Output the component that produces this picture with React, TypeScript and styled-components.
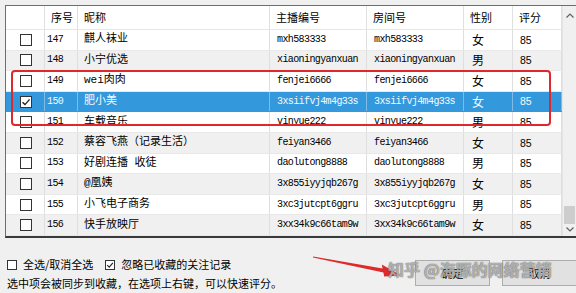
import React from "react";
import styled, { createGlobalStyle } from "styled-components";

const GlobalStyle = createGlobalStyle`
  html, body {
    margin: 0;
    padding: 0;
    background: #f0f0f0;
    overflow: hidden;
  }
  * { box-sizing: border-box; }
`;

const CJK = `"Noto Sans CJK SC", "Noto Sans", sans-serif`;
const MONO = `"Liberation Mono", "Noto Sans CJK SC", monospace`;
const SANS = `"Liberation Sans", Arial, sans-serif`;

const COLS = "39px 33px 192px 97px 97px 49px 49px";

const Page = styled.div`
  position: relative;
  width: 576px;
  height: 293px;
  overflow: hidden;
  display: flex;
  flex-direction: column;
  font-family: ${CJK};
  color: #000;
`;

const TableFrame = styled.div`
  position: relative;
  margin: 5px 0 0 5px;
  display: flex;
  width: 571px;
  border-top: 1px solid #6e6e6e;
  border-left: 1px solid #6e6e6e;
  border-bottom: 2px solid #3a3a3a;
  background: #fff;
`;

const Grid = styled.div`
  display: flex;
  flex-direction: column;
  width: 556px;
`;

const HeaderRow = styled.div`
  display: grid;
  grid-template-columns: ${COLS};
  height: 24px;
  background: #fff;
  border-bottom: 1px solid #e6e6e6;
`;

const HeadCell = styled.div`
  display: flex;
  align-items: center;
  padding-left: 6px;
  font-family: ${CJK};
  font-size: 11px;
  line-height: 1;
  border-right: 1px solid #e0e0e0;
`;

const Row = styled.div<{ $alt: boolean; $selected: boolean }>`
  --grid: ${(p) => (p.$selected ? "#7dbce9" : "#dedede")};
  display: grid;
  grid-template-columns: ${COLS};
  height: 20.6px;
  background: ${(p) => (p.$selected ? "#3398dc" : p.$alt ? "#f0f0f0" : "#ffffff")};
  color: ${(p) => (p.$selected ? "#f4faff" : "#000")};
  border-bottom: 1px solid ${(p) => (p.$selected ? "#3398dc" : "#e8e8e8")};
`;

const BaseCell = styled.div`
  display: flex;
  align-items: center;
  padding-left: 6px;
  white-space: nowrap;
  overflow: hidden;
  border-right: 1px solid var(--grid);
  line-height: 1;
`;

const CheckCell = styled(BaseCell)`
  padding-left: 14px;
`;

const NumCell = styled(BaseCell)`
  padding-left: 2px;
  font-family: ${MONO};
  font-size: 10px;
  letter-spacing: -0.6px;
`;

const NameCell = styled(BaseCell)`
  font-family: ${MONO};
  font-size: 11px;
`;

const CodeCell = styled(BaseCell)`
  padding-left: 7px;
  font-family: ${MONO};
  font-size: 10px;
  letter-spacing: -0.6px;
`;

const GenderCell = styled(BaseCell)`
  padding-left: 8px;
  font-family: ${CJK};
  font-size: 12px;
`;

const ScoreCell = styled(BaseCell)`
  padding-left: 7px;
  font-family: ${SANS};
  font-size: 10.5px;
`;

const Box = styled.span<{ $size: number }>`
  display: inline-flex;
  align-items: center;
  justify-content: center;
  flex: none;
  width: ${(p) => p.$size}px;
  height: ${(p) => p.$size}px;
  border: 1px solid #333;
  background: #fff;
`;

const CheckBox = ({ checked, size }: { checked?: boolean; size: number }) => (
  <Box $size={size}>
    {checked && (
      <svg width={size - 2} height={size - 2} viewBox="0 0 10 10">
        <path d="M1.5 5.2 L4 7.6 L8.6 2.4" fill="none" stroke="#222" strokeWidth="1.4" />
      </svg>
    )}
  </Box>
);

const Scrollbar = styled.div`
  width: 14px;
  display: flex;
  flex-direction: column;
  background: #f0f0f0;
  border-left: 1px solid #e4e4e4;
`;

const ScrollArrow = styled.div<{ $h: number }>`
  height: ${(p) => p.$h}px;
  display: flex;
  align-items: center;
  justify-content: center;
`;

const Track = styled.div`
  flex: 1;
  display: flex;
  flex-direction: column;
  justify-content: flex-end;
`;

const Thumb = styled.div`
  height: 18px;
  margin: 0 1px;
  background: #cdcdcd;
`;

const Highlight = styled.div`
  position: absolute;
  left: 5px;
  top: 64px;
  width: 540px;
  height: 56px;
  border: 2px solid #e0282c;
  border-radius: 4px;
  pointer-events: none;
`;

const Footer = styled.div`
  display: flex;
  padding-left: 7px;
`;

const FooterLeft = styled.div`
  display: flex;
  flex-direction: column;
  padding-top: 18px;
`;

const Options = styled.div`
  display: flex;
  align-items: center;
  height: 18px;
  font-size: 11px;
  line-height: 1;
`;

const Option = styled.label`
  display: flex;
  align-items: center;
  gap: 6px;
  margin-right: 12px;
`;

const Hint = styled.div`
  margin-top: 1px;
  height: 18px;
  display: flex;
  align-items: center;
  font-size: 11px;
  line-height: 1;
`;

const ButtonGroup = styled.div`
  display: flex;
  gap: 12px;
  margin-left: auto;
  margin-right: -1px;
  margin-top: 22px;
`;

const Button = styled.button`
  width: 75px;
  height: 26px;
  padding: 0;
  background: #e1e1e1;
  border: 1px solid #adadad;
  font-family: ${CJK};
  font-size: 11px;
  color: #000;
`;

const Arrow = styled.svg`
  position: absolute;
  left: 305px;
  top: 250px;
  pointer-events: none;
`;

const Watermark = styled.div`
  position: absolute;
  left: 388px;
  top: 259px;
  font-family: ${CJK};
  font-size: 16px;
  font-weight: 700;
  line-height: 20px;
  white-space: nowrap;
  color: rgba(255, 255, 255, 0.55);
  text-shadow: 0 0 1px rgba(60, 60, 60, 0.75), 0 0 1px rgba(60, 60, 60, 0.6);
  pointer-events: none;
`;

type Item = {
  id: number;
  name: string;
  code: string;
  room: string;
  gender: string;
  score: number;
  selected?: boolean;
};

const items: Item[] = [
  { id: 147, name: "麒人袜业", code: "mxh583333", room: "mxh583333", gender: "女", score: 85 },
  { id: 148, name: "小宁优选", code: "xiaoningyanxuan", room: "xiaoningyanxuan", gender: "男", score: 85 },
  { id: 149, name: "wei肉肉", code: "fenjei6666", room: "fenjei6666", gender: "女", score: 85 },
  { id: 150, name: "肥小美", code: "3xsiifvj4m4g33s", room: "3xsiifvj4m4g33s", gender: "女", score: 85, selected: true },
  { id: 151, name: "车载音乐", code: "vinyue222", room: "vinyue222", gender: "男", score: 85 },
  { id: 152, name: "蔡容飞燕（记录生活）", code: "feiyan3466", room: "feiyan3466", gender: "女", score: 85 },
  { id: 153, name: "好剧连播 收徒", code: "daolutong8888", room: "daolutong8888", gender: "男", score: 85 },
  { id: 154, name: "@凰姨", code: "3x855iyyjqb267g", room: "3x855iyyjqb267g", gender: "女", score: 85 },
  { id: 155, name: "小飞电子商务", code: "3xc3jutcpt6ggru", room: "3xc3jutcpt6ggru", gender: "男", score: 85 },
  { id: 156, name: "快手放映厅", code: "3xx34k9c66tam9w", room: "3xx34k9c66tam9w", gender: "女", score: 85 },
];

const headers = ["", "序号", "昵称", "主播编号", "房间号", "性别", "评分"];

export default function App() {
  return (
    <>
      <GlobalStyle />
      <Page>
        <TableFrame>
          <Grid>
            <HeaderRow>
              {headers.map((h, i) => (
                <HeadCell key={i}>{h}</HeadCell>
              ))}
            </HeaderRow>
            {items.map((it, i) => (
              <Row key={it.id} $alt={i % 2 === 1} $selected={!!it.selected}>
                <CheckCell>
                  <CheckBox size={12} checked={it.selected} />
                </CheckCell>
                <NumCell>{it.id}</NumCell>
                <NameCell>{it.name}</NameCell>
                <CodeCell>{it.code}</CodeCell>
                <CodeCell>{it.room}</CodeCell>
                <GenderCell>{it.gender}</GenderCell>
                <ScoreCell>{it.score}</ScoreCell>
              </Row>
            ))}
          </Grid>
          <Scrollbar>
            <ScrollArrow $h={18}>
              <svg width="8" height="5" viewBox="0 0 8 5">
                <path d="M0.5 4.5 L4 1 L7.5 4.5" fill="none" stroke="#606060" strokeWidth="1.2" />
              </svg>
            </ScrollArrow>
            <Track>
              <Thumb />
            </Track>
            <ScrollArrow $h={12}>
              <svg width="8" height="5" viewBox="0 0 8 5">
                <path d="M0.5 0.5 L4 4 L7.5 0.5" fill="none" stroke="#606060" strokeWidth="1.2" />
              </svg>
            </ScrollArrow>
          </Scrollbar>
          <Highlight />
        </TableFrame>
        <Footer>
          <FooterLeft>
            <Options>
              <Option>
                <CheckBox size={10} />
                全选/取消全选
              </Option>
              <Option>
                <CheckBox size={10} checked />
                忽略已收藏的关注记录
              </Option>
            </Options>
            <Hint>选中项会被同步到收藏，在选项上右键，可以快速评分。</Hint>
          </FooterLeft>
          <ButtonGroup>
            <Button>确定</Button>
            <Button>取消</Button>
          </ButtonGroup>
        </Footer>
        <Arrow width="100" height="32" viewBox="0 0 100 32">
          <polygon
            points="8,6.6 77.6,18.5 76.8,14.6 96,25.5 79.2,26.4 78.4,22.5 8,7.4"
            fill="#dd2a2a"
          />
        </Arrow>
        <Watermark>知乎 @海豚的网络营销</Watermark>
      </Page>
    </>
  );
}
